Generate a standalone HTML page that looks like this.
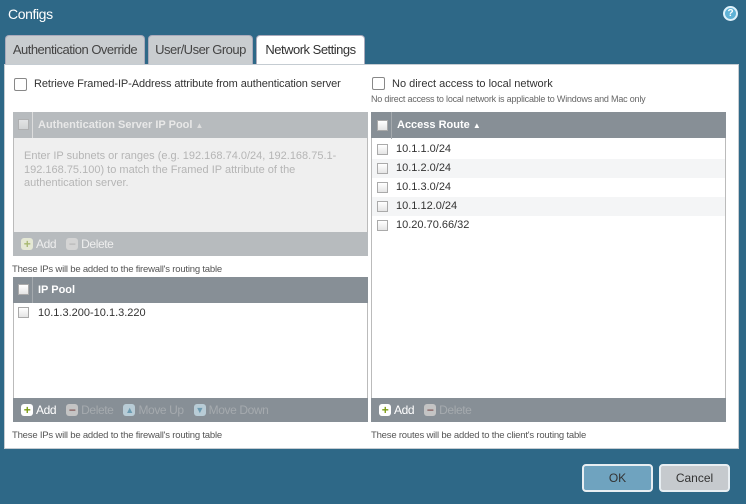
<!DOCTYPE html>
<html><head><style>
*{box-sizing:border-box;margin:0;padding:0}
body{width:746px;height:504px;background:#2e6887;font-family:"Liberation Sans",sans-serif;position:relative;overflow:hidden;font-size:11px;color:#333}
.a{position:absolute}
.title{left:8px;top:6px;color:#fff;font-size:14px;letter-spacing:-0.4px}
.help{left:723px;top:6px;width:15px;height:15px;border-radius:50%;background:#5fb2d6;border:2px solid #dff2fb;color:#fff;font-size:10px;font-weight:bold;text-align:center;line-height:11px}
.tab{top:35px;height:29px;background:#c9cdd0;border:1px solid #aab;border-bottom:none;border-radius:4px 4px 0 0;font-size:13px;letter-spacing:-0.5px;color:#444;text-align:center;line-height:28px}
.panel{left:4px;top:64px;width:735px;height:385px;background:#fff;border:1px solid #c5ccd2}
.cb{width:13px;height:13px;border:1px solid #888;background:#fff;border-radius:2px}
.scb{width:11px;height:11px;border:1px solid #aaa;background:linear-gradient(#fff,#e4e4e4)}
.hdr{height:26px;background:#878f96;color:#fff;font-weight:bold;font-size:11px;line-height:26px}
.ft{height:24px;background:#878f96;font-size:12px;line-height:24px;letter-spacing:-0.4px;display:flex;align-items:center}
.note{font-size:9.5px;color:#555;letter-spacing:-0.2px}
.row{height:19px;line-height:19px;font-size:11px;color:#333}
.ic{display:inline-block;width:12px;height:12px;border-radius:3px;margin-right:3px;text-align:center;line-height:12px;font-weight:bold;font-size:12px}
.gap{display:inline-block;width:10px}
.btn{top:464px;height:28px;border:2px solid #e8eef2;border-radius:4px;text-align:center;line-height:24px;font-size:12px;color:#333}
</style></head><body>
<div class="a title">Configs</div>
<div class="a help">?</div>
<div class="a tab" style="left:5px;width:140px">Authentication Override</div>
<div class="a tab" style="left:148px;width:105px">User/User Group</div>
<div class="a tab" style="left:256px;width:109px;background:#fff;height:30px;color:#333">Network Settings</div>
<div class="a panel"></div>

<div class="a cb" style="left:14px;top:78px"></div>
<div class="a" style="left:34px;top:78px;font-size:11px;letter-spacing:-0.1px">Retrieve Framed-IP-Address attribute from authentication server</div>
<div class="a cb" style="left:372px;top:77px"></div>
<div class="a" style="left:392px;top:78px;font-size:11px">No direct access to local network</div>
<div class="a note" style="left:371px;top:94px;font-size:9px;color:#666">No direct access to local network is applicable to Windows and Mac only</div>

<!-- grid 1 -->
<div class="a" style="left:13px;top:112px;width:355px;height:144px;background:#efefef;border:1px solid #bbb"></div>
<div class="a hdr" style="left:13px;top:112px;width:355px;background:#b7bbbe;color:#e8e8e8;padding-left:25px">Authentication Server IP Pool <span style="font-size:8px;color:#ddd">▲</span></div>
<div class="a" style="left:32px;top:112px;width:1px;height:26px;background:#ddd"></div>
<div class="a scb" style="left:18px;top:119px;opacity:.6"></div>
<div class="a" style="left:24px;top:150px;width:335px;font-size:11px;color:#b5b5b5;line-height:13.5px">Enter IP subnets or ranges (e.g. 192.168.74.0/24, 192.168.75.1-192.168.75.100) to match the Framed IP attribute of the authentication server.</div>
<div class="a ft" style="left:13px;top:232px;width:355px;background:#b7bbbe;color:#eee;padding-left:8px"><span class="ic" style="background:#e5e8d5;color:#a8b870">+</span>Add<span class="gap"></span><span class="ic" style="background:#d4d4d4;color:#bbb">−</span>Delete</div>
<div class="a note" style="left:12px;top:264px">These IPs will be added to the firewall's routing table</div>

<!-- grid 2 -->
<div class="a" style="left:13px;top:277px;width:355px;height:145px;background:#fff;border:1px solid #bbb"></div>
<div class="a hdr" style="left:13px;top:277px;width:355px;padding-left:25px">IP Pool</div>
<div class="a" style="left:32px;top:277px;width:1px;height:26px;background:#a5aaae"></div>
<div class="a scb" style="left:18px;top:284px"></div>
<div class="a scb" style="left:18px;top:307px"></div>
<div class="a row" style="left:38px;top:304px">10.1.3.200-10.1.3.220</div>
<div class="a ft" style="left:13px;top:398px;width:355px;color:#fff;padding-left:8px"><span class="ic" style="background:#fff;color:#7a9a10">+</span>Add<span class="gap"></span><span class="ic" style="background:#c4c4c4;color:#8a6060">−</span><span style="color:#a5aaae">Delete</span><span class="gap"></span><span class="ic" style="background:#b8ccd6;color:#6b9ab0;font-size:9px">▲</span><span style="color:#a5aaae">Move Up</span><span class="gap"></span><span class="ic" style="background:#b8ccd6;color:#6b9ab0;font-size:9px">▼</span><span style="color:#a5aaae">Move Down</span></div>
<div class="a note" style="left:12px;top:430px">These IPs will be added to the firewall's routing table</div>

<!-- grid 3 -->
<div class="a" style="left:371px;top:112px;width:355px;height:310px;background:#fff;border:1px solid #bbb"></div>
<div class="a hdr" style="left:371px;top:112px;width:355px;padding-left:26px">Access Route <span style="font-size:8px">▲</span></div>
<div class="a" style="left:391px;top:112px;width:1px;height:27px;background:#a5aaae"></div>
<div class="a scb" style="left:377px;top:120px"></div>
<div class="a" style="left:372px;top:159px;width:353px;height:19px;background:#f4f5f6"></div>
<div class="a" style="left:372px;top:197px;width:353px;height:19px;background:#f4f5f6"></div>
<div class="a scb" style="left:377px;top:144px"></div><div class="a row" style="left:396px;top:140px">10.1.1.0/24</div>
<div class="a scb" style="left:377px;top:163px"></div><div class="a row" style="left:396px;top:159px">10.1.2.0/24</div>
<div class="a scb" style="left:377px;top:182px"></div><div class="a row" style="left:396px;top:178px">10.1.3.0/24</div>
<div class="a scb" style="left:377px;top:201px"></div><div class="a row" style="left:396px;top:197px">10.1.12.0/24</div>
<div class="a scb" style="left:377px;top:220px"></div><div class="a row" style="left:396px;top:216px">10.20.70.66/32</div>
<div class="a ft" style="left:371px;top:398px;width:355px;color:#fff;padding-left:8px"><span class="ic" style="background:#fff;color:#7a9a10">+</span>Add<span class="gap"></span><span class="ic" style="background:#c4c4c4;color:#8a6060">−</span><span style="color:#a5aaae">Delete</span></div>
<div class="a note" style="left:371px;top:430px">These routes will be added to the client's routing table</div>

<div class="a btn" style="left:582px;width:71px;background:#6fa3bf">OK</div>
<div class="a btn" style="left:659px;width:71px;background:#c6cace">Cancel</div>
</body></html>
